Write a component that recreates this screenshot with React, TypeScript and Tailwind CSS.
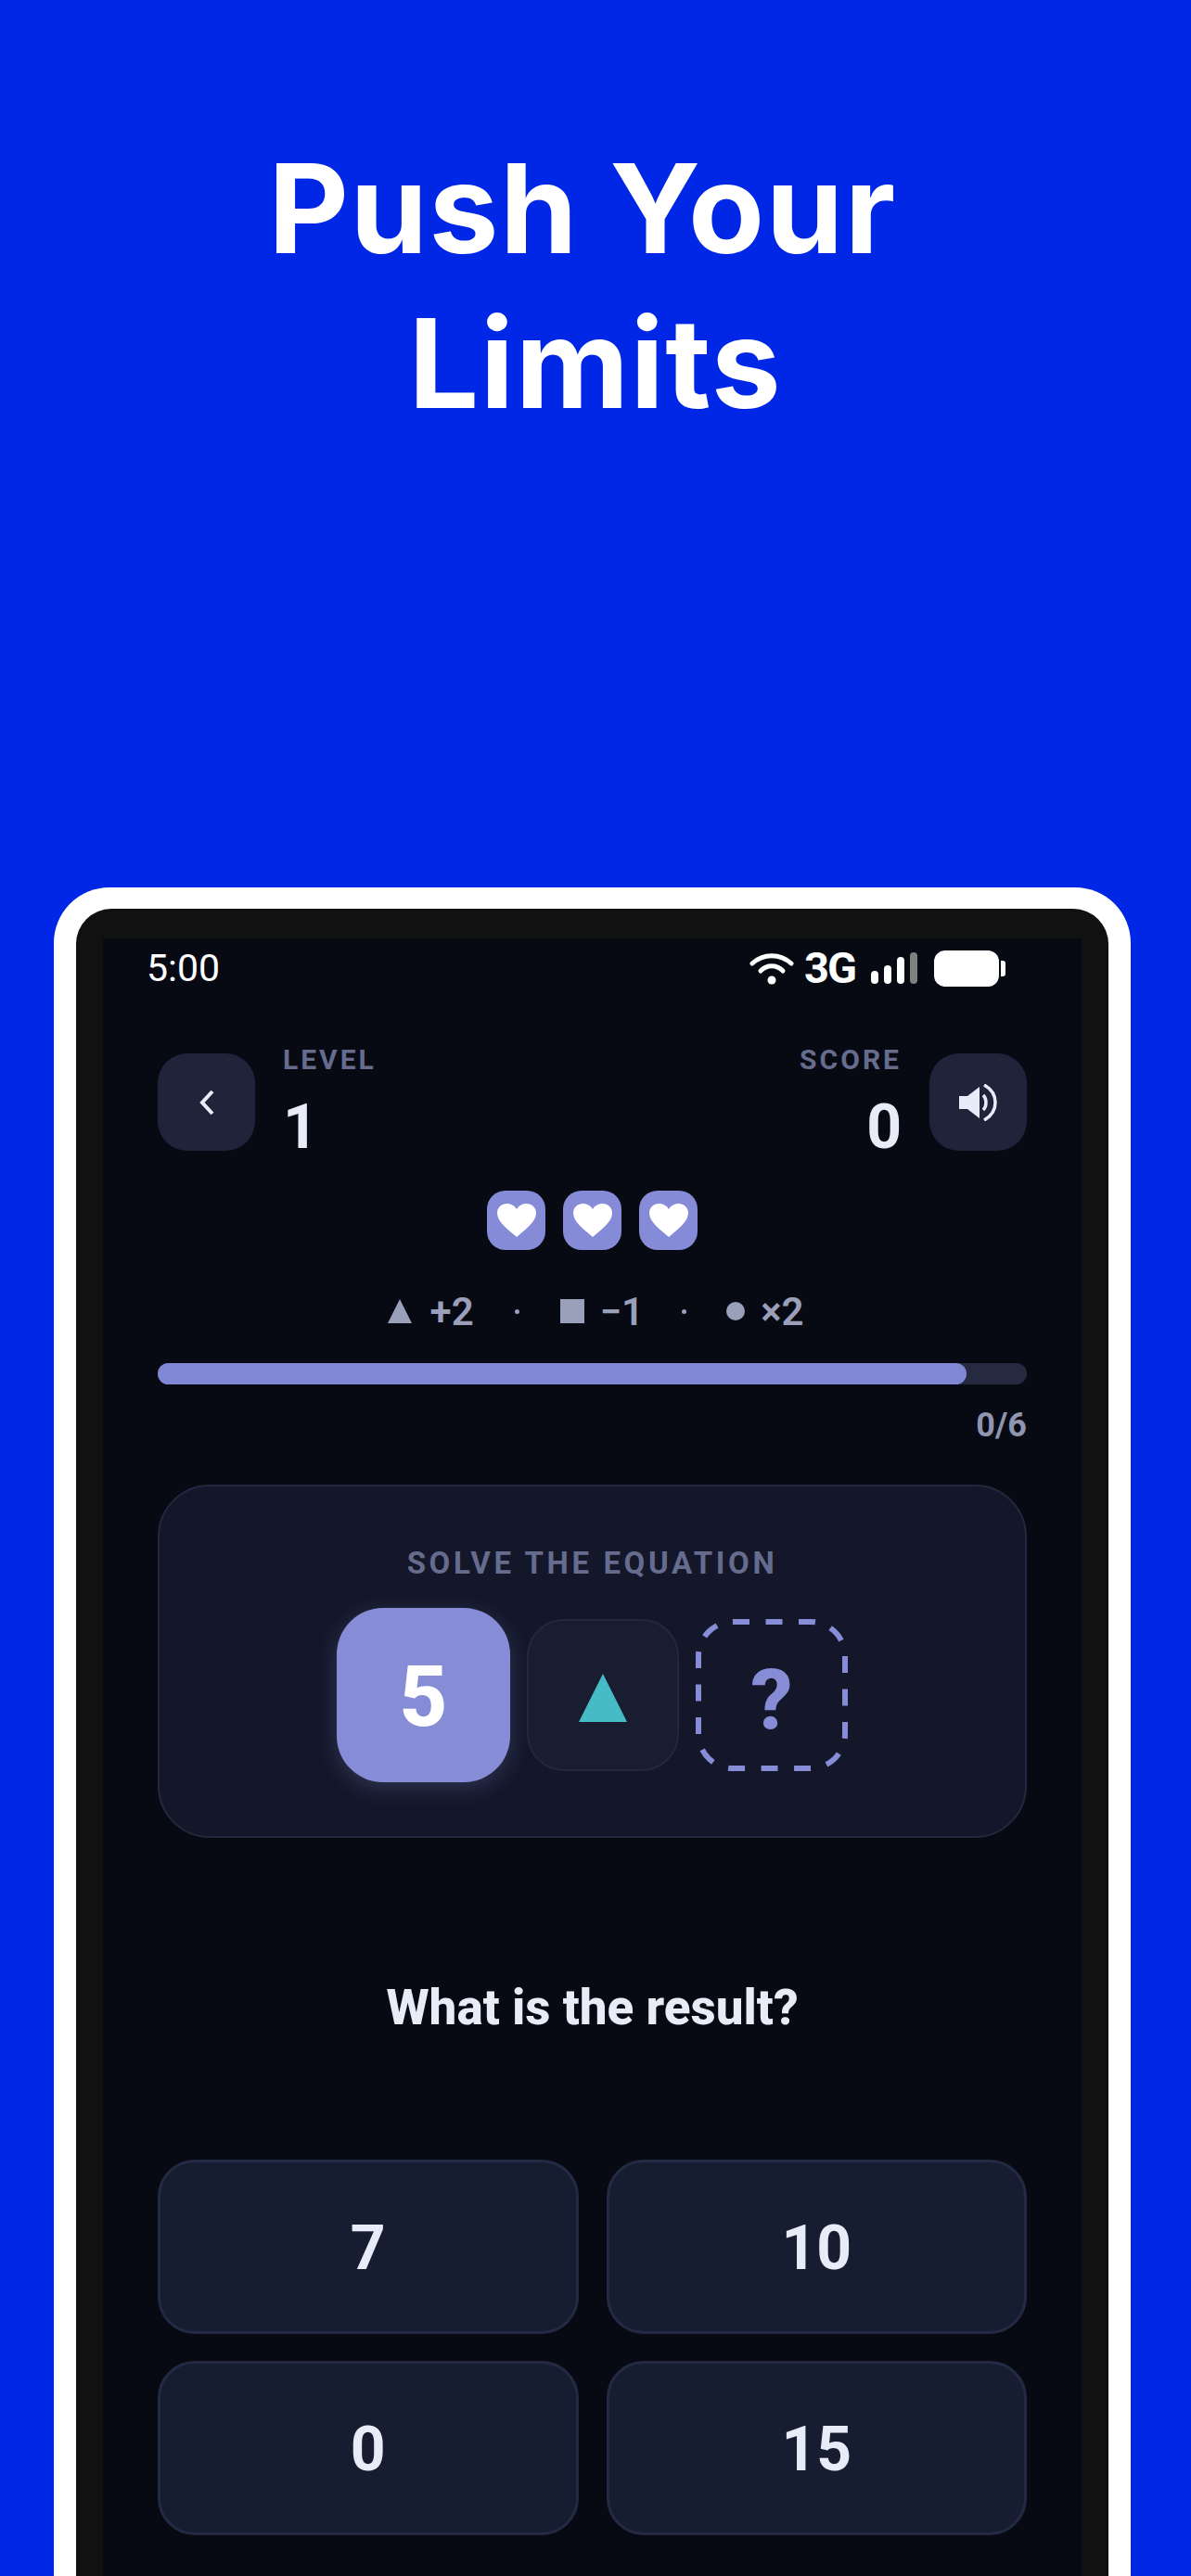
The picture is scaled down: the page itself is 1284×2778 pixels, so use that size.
import React from "react";

const roboto = "font-['Roboto',sans-serif]";

function Wifi() {
  return (
    <svg width="48" height="35" viewBox="0 0 48 35" fill="none" stroke="white" strokeLinecap="round">
      <path d="M3 12 C15 1 33 1 45 12" strokeWidth="5" />
      <path d="M12 20 C19 13 29 13 36 20" strokeWidth="5" />
      <circle cx="24" cy="30" r="4.5" fill="white" stroke="none" />
    </svg>
  );
}

function Speaker() {
  return (
    <svg width="42" height="40" viewBox="0 0 42 40" fill="none">
      <path d="M0 13 H9 L22 3 V37 L9 27 H0 Z" fill="#e8ecf8" />
      <path d="M26 12 C30 16 30 24 26 28" stroke="#e8ecf8" strokeWidth="3.5" />
      <path d="M27 1 C43 10 43 30 27 39" stroke="#e8ecf8" strokeWidth="3.5" />
    </svg>
  );
}

function Heart() {
  return (
    <div className="w-[63px] h-[64px] rounded-[20px] bg-[#858bd6] flex items-center justify-center">
      <svg width="42" height="36" viewBox="0 0 42 36">
        <path d="M21 36 C12 28 0 20 0 10 C0 4 5 0 10.500 0 C15 0 19 2.500 21 6 C23 2.500 27 0 31.500 0 C37 0 42 4 42 10 C42 20 30 28 21 36 Z" fill="white" />
      </svg>
    </div>
  );
}

function Answer({ v }: { v: string }) {
  return (
    <div className="h-[188px] pt-[3px] rounded-[40px] bg-[#171d31] border-[3px] border-[#252a44] flex items-center justify-center text-[66px] font-bold text-[#e8ecf8]">
      {v}
    </div>
  );
}

export default function App() {
  return (
    <div className={`w-[1284px] h-[2778px] overflow-hidden bg-[#0026e6] ${roboto}`}>
      <div className="h-[957px] pt-[141px] text-center text-white font-['Inter',sans-serif] font-bold text-[134px] leading-[167px] tracking-[1.500px]">
        <div className="pr-[28px]">Push Your</div>
        <div>Limits</div>
      </div>

      <div className="ml-[58px] w-[1161px] h-[1900px] rounded-t-[60px] bg-white px-[24px] pt-[23px]">
        <div className="h-full rounded-t-[38px] bg-[#111111] px-[29px] pt-[32px]">
          <div className="h-full bg-[#070a13]">
            {/* status bar */}
            <div className="h-[124px] pl-[47px] pr-[82px] pt-[8px] flex items-start justify-between text-white">
              <span className="text-[41px] leading-[48px]">5:00</span>
              <div className="flex items-center h-[48px]">
                <Wifi />
                <span className="ml-[11px] text-[47px] leading-[48px] font-bold tracking-[-2px]">3G</span>
                <div className="ml-[17px] flex items-end gap-[6px] h-[34px]">
                  <div className="w-[8px] h-[14px] rounded-full bg-white" />
                  <div className="w-[8px] h-[20px] rounded-full bg-white" />
                  <div className="w-[8px] h-[29px] rounded-full bg-white" />
                  <div className="w-[8px] h-[34px] rounded-full bg-[#808080]" />
                </div>
                <div className="ml-[18px] w-[70px] h-[39px] rounded-[12px] bg-white" />
                <div className="ml-[2px] w-[5px] h-[17px] rounded-r-[3px] bg-white" />
              </div>
            </div>

            <div className="px-[59px]">
              {/* header */}
              <div className="flex justify-between h-[105px]">
                <div className="flex gap-[30px]">
                  <div className="w-[105px] h-[105px] rounded-[32px] bg-[#1f243a] flex items-center justify-center">
                    <svg width="18" height="28" viewBox="0 0 18 28" fill="none" stroke="#e8ecf8" strokeWidth="4">
                      <path d="M15 2 L4 14 L15 26" />
                    </svg>
                  </div>
                  <div className="flex flex-col -mt-[8px]">
                    <span className="text-[30px] leading-[30px] font-bold tracking-[3px] text-[#666c8e]">LEVEL</span>
                    <span className="mt-[23px] text-[66px] leading-[70px] font-bold text-[#e8ecf8]">1</span>
                  </div>
                </div>
                <div className="flex gap-[30px]">
                  <div className="flex flex-col items-end -mt-[8px]">
                    <span className="text-[30px] leading-[30px] font-bold tracking-[3px] text-[#666c8e]">SCORE</span>
                    <span className="mt-[23px] text-[66px] leading-[70px] font-bold text-[#e8ecf8]">0</span>
                  </div>
                  <div className="w-[105px] h-[105px] rounded-[32px] bg-[#1f243a] flex items-center justify-center">
                    <Speaker />
                  </div>
                </div>
              </div>

              {/* hearts */}
              <div className="mt-[43px] flex justify-center gap-[19px]">
                <Heart />
                <Heart />
                <Heart />
              </div>

              {/* rules */}
              <div className="mt-[44px] h-[44px] pl-[7px] flex items-center justify-center text-[42px] font-semibold text-[#9a9fba]">
                <span className="w-0 h-0 border-l-[13px] border-r-[13px] border-b-[26px] border-l-transparent border-r-transparent border-b-[#9a9fba]" />
                <span className="ml-[20px]">+2</span>
                <span className="ml-[44px] w-[5px] h-[5px] rounded-full bg-[#9a9fba]" />
                <span className="ml-[44px] w-[26px] h-[26px] bg-[#9a9fba]" />
                <span className="ml-[17px]">−1</span>
                <span className="ml-[41px] w-[5px] h-[5px] rounded-full bg-[#9a9fba]" />
                <span className="ml-[43px] w-[20px] h-[20px] rounded-full bg-[#9a9fba]" />
                <span className="ml-[17px]">×2</span>
              </div>

              {/* progress */}
              <div className="mt-[34px] h-[23px] rounded-full bg-[#252a40]">
                <div className="h-full w-[872px] rounded-full bg-[#8088d6]" />
              </div>
              <div className="mt-[24px] text-right text-[36px] leading-[40px] font-bold text-[#9095b0]">0/6</div>

              {/* equation card */}
              <div className="mt-[44px] h-[381px] rounded-[56px] bg-[#131729] border-2 border-[#23283f] flex flex-col items-center pt-[65px]">
                <div className="text-[33px] leading-[36px] font-bold tracking-[3.600px] text-[#666c8e]">SOLVE THE EQUATION</div>
                <div className="mt-[30px] flex items-center gap-[18px]">
                  <div className="w-[187px] h-[188px] pt-[4px] rounded-[50px] bg-[#868cd6] shadow-[0_6px_24px_rgba(134,140,214,0.25)] flex items-center justify-center text-[90px] font-extrabold text-white">5</div>
                  <div className="w-[164px] h-[164px] pt-[6px] rounded-[40px] bg-[#181d30] border-2 border-[#23283f] flex items-center justify-center">
                    <span className="w-0 h-0 border-l-[26px] border-r-[26px] border-b-[52px] border-l-transparent border-r-transparent border-b-[#45bbc6]" />
                  </div>
                  <div className="relative w-[164px] h-[164px] pt-[10px] flex items-center justify-center text-[90px] font-extrabold text-[#868cd6]">
                    <svg className="absolute inset-0" width="164" height="164" viewBox="0 0 164 164" fill="none">
                      <rect x="3" y="3" width="158" height="158" rx="37" stroke="#868cd6" strokeWidth="6" strokeDasharray="18 17.500" />
                    </svg>
                    ?
                  </div>
                </div>
              </div>

              {/* question */}
              <div className="mt-[151px] text-center text-[53px] leading-[64px] font-extrabold text-[#e8ecf8]">What is the result?</div>

              {/* answers */}
              <div className="mt-[132px] grid grid-cols-2 gap-x-[30px] gap-y-[29px]">
                <Answer v="7" />
                <Answer v="10" />
                <Answer v="0" />
                <Answer v="15" />
              </div>
            </div>
          </div>
        </div>
      </div>
    </div>
  );
}
